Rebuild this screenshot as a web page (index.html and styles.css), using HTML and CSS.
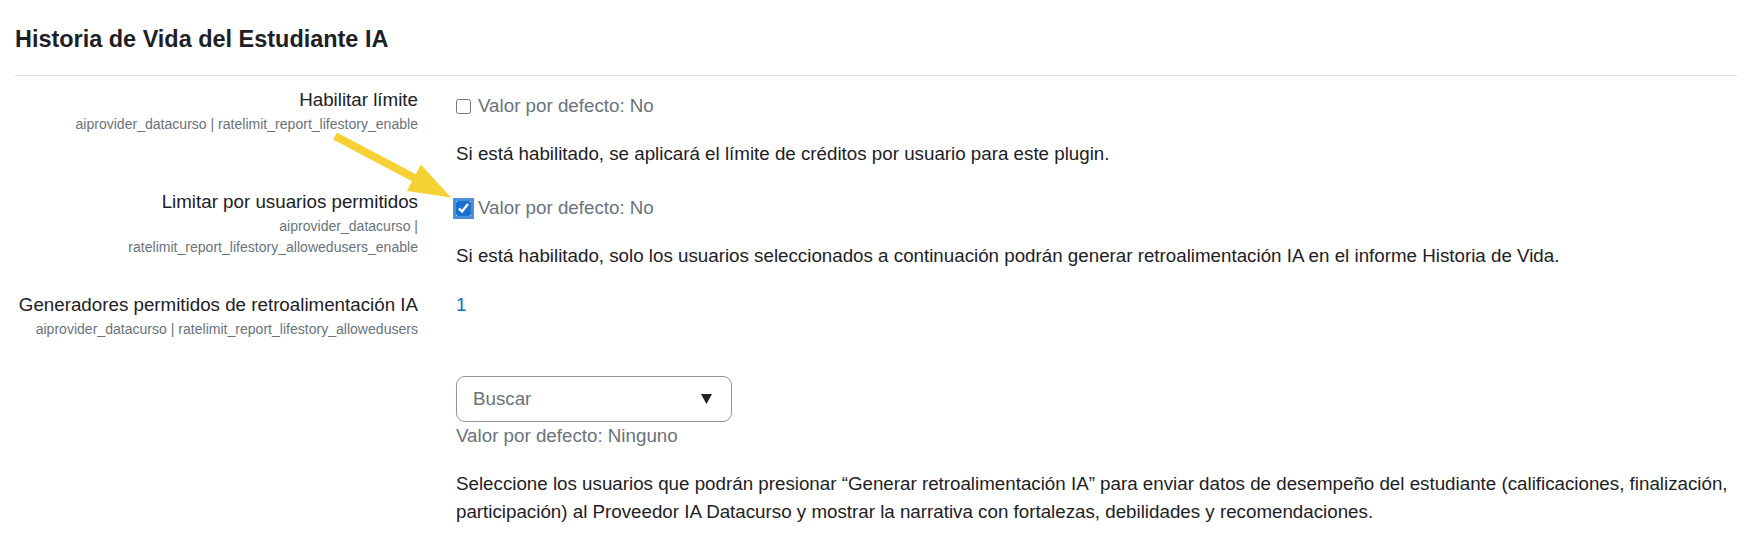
FILE: index.html
```html
<!DOCTYPE html>
<html lang="es">
<head>
<meta charset="utf-8">
<title>Historia de Vida del Estudiante IA</title>
<link rel="stylesheet" href="styles.css">
</head>
<body>
<div class="page">
  <h3 class="title">Historia de Vida del Estudiante IA</h3>
  <hr class="divider">

  <div class="setting">
    <div class="label-col">
      <div class="label">Habilitar límite</div>
      <div class="key">aiprovider_datacurso | ratelimit_report_lifestory_enable</div>
    </div>
    <div class="content">
      <div class="checkrow">
        <input type="checkbox" class="check">
        <span class="default">Valor por defecto: No</span>
      </div>
      <div class="desc">Si está habilitado, se aplicará el límite de créditos por usuario para este plugin.</div>
    </div>
  </div>

  <div class="setting">
    <div class="label-col">
      <div class="label">Limitar por usuarios permitidos</div>
      <div class="key">aiprovider_datacurso | ratelimit_report_lifestory_allowedusers_enable</div>
    </div>
    <div class="content">
      <div class="checkrow">
        <input type="checkbox" class="check focused" checked>
        <span class="default">Valor por defecto: No</span>
      </div>
      <div class="desc">Si está habilitado, solo los usuarios seleccionados a continuación podrán generar retroalimentación IA en el informe Historia de Vida.</div>
    </div>
  </div>

  <div class="setting">
    <div class="label-col">
      <div class="label">Generadores permitidos de retroalimentación IA</div>
      <div class="key">aiprovider_datacurso | ratelimit_report_lifestory_allowedusers</div>
    </div>
    <div class="content">
      <div class="count">1</div>
      <div class="select">
        <span class="placeholder">Buscar</span>
        <svg class="caret" width="11" height="11" viewBox="0 0 11 11"><polygon points="0,1 11,1 5.5,11" fill="#1d2125"/></svg>
      </div>
      <div class="default">Valor por defecto: Ninguno</div>
      <div class="desc">Seleccione los usuarios que podrán presionar “Generar retroalimentación IA” para enviar datos de desempeño del estudiante (calificaciones, finalización, participación) al Proveedor IA Datacurso y mostrar la narrativa con fortalezas, debilidades y recomendaciones.</div>
    </div>
  </div>
</div>

<svg class="annotation" width="1752" height="558" viewBox="0 0 1752 558">
  <polygon points="336.9,132.5 415.8,174.3 420.9,164.6 451,197.5 406.9,191.1 412.0,181.3 333.1,139.5" fill="#f5d133"/>
</svg>
</body>
</html>
```

FILE: styles.css
```css
html, body {
  margin: 0;
  padding: 0;
  background: #ffffff;
}

body {
  font-family: "Liberation Sans", Arial, sans-serif;
  font-size: 18.75px;
  line-height: 28.125px;
  color: #1d2125;
  position: relative;
  width: 1752px;
  height: 558px;
  overflow: hidden;
}

.page {
  padding: 0 15px 0 15px;
}

.title {
  margin: 25px 0 0 0;
  font-size: 23.44px;
  line-height: 28px;
  font-weight: 700;
  color: #1d2125;
}

.divider {
  margin: 22px 0 10px 0;
  border: 0;
  border-top: 1px solid #dee2e6;
  height: 0;
}

.setting {
  display: grid;
  grid-template-columns: 403px 1fr;
  column-gap: 38px;
  margin-bottom: 20px;
}

.label-col {
  text-align: right;
}

.label {
  font-size: 18.75px;
  line-height: 28.125px;
}

.key {
  font-size: 14.06px;
  line-height: 21.1px;
  color: #6a737b;
}

.content {
  min-width: 0;
}

.checkrow {
  display: flex;
  align-items: center;
  gap: 7px;
  padding-top: 6px;
}

.check {
  width: 15px;
  height: 15px;
  margin: 0;
  accent-color: #1a6fd2;
  flex: none;
}

.check.focused {
  box-shadow: 0 0 0 3px #4d8fd8;
  outline: none;
}

.default {
  color: #6a737b;
}

.desc {
  margin-top: 20px;
}

.count {
  color: #0f6cbf;
}

.select {
  margin-top: 57px;
  width: 276px;
  height: 46px;
  box-sizing: border-box;
  border: 1px solid #8f959e;
  border-radius: 9px;
  display: flex;
  align-items: center;
  justify-content: space-between;
  padding: 0 19px 0 16px;
}

.placeholder {
  color: #6a737b;
}

.caret {
  display: block;
}

.annotation {
  position: absolute;
  left: 0;
  top: 0;
  pointer-events: none;
}
```
